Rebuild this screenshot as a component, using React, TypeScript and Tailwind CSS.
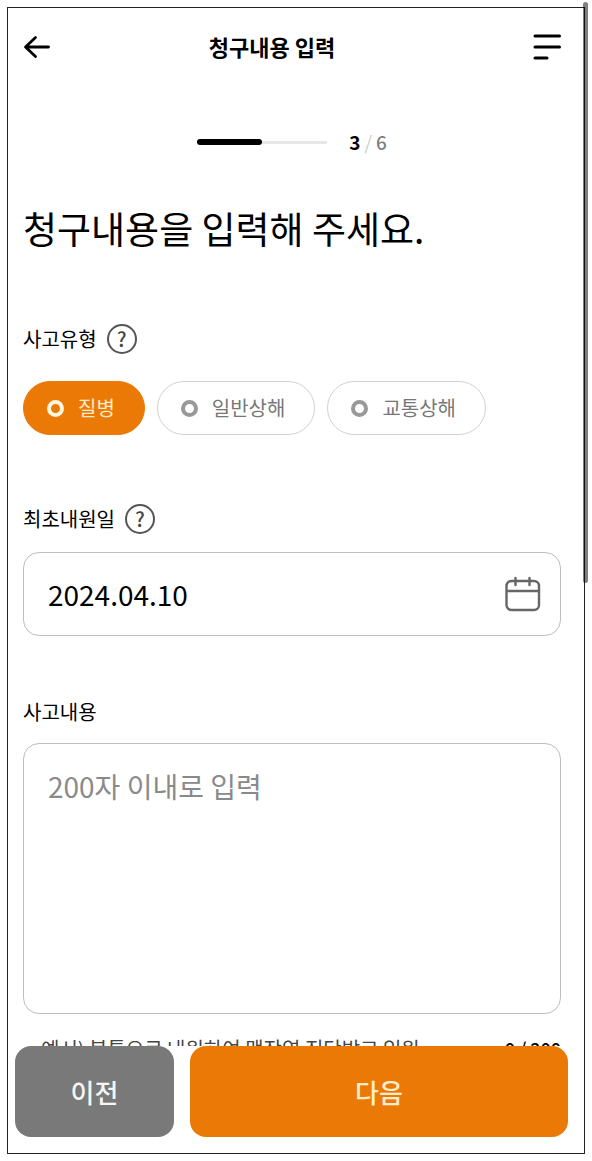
import { useState } from 'react'

const accidentTypes = ['질병', '일반상해', '교통상해']

function HelpButton({ label }: { label: string }) {
  return (
    <button
      type="button"
      aria-label={label}
      className="flex h-[30px] w-[30px] items-center justify-center rounded-full border-2 border-[#555] text-xl leading-none font-medium text-[#444]"
    >
      ?
    </button>
  )
}

function Header() {
  return (
    <header className="flex h-[77px] shrink-0 items-center pr-[23px] pl-[15px]">
      <button type="button" aria-label="뒤로" className="w-10">
        <svg width="28" height="24" viewBox="0 0 28 24" fill="none" stroke="#000" strokeWidth="2.8" strokeLinecap="round" strokeLinejoin="round">
          <path d="M12.5 2.5 2.5 12l10 9.5M3 12h22.5" />
        </svg>
      </button>
      <h2 className="flex-1 pb-0.5 text-center text-[22px] leading-8 font-bold">청구내용 입력</h2>
      <button type="button" aria-label="메뉴" className="flex w-20 justify-end">
        <svg width="28" height="28" viewBox="0 0 28 28" fill="none" stroke="#000" strokeWidth="3" strokeLinecap="round">
          <path d="M2 3h24.500M2 14h24.500M2 25h12" />
        </svg>
      </button>
    </header>
  )
}

function Progress() {
  return (
    <div className="mt-[41px] flex h-8 items-center justify-center">
      <div className="mr-[22px] flex w-[130px] items-center">
        <div className="h-1.5 w-1/2 rounded-full bg-black" />
        <div className="h-[3px] w-1/2 bg-[#e6e6e6]" />
      </div>
      <p className="flex gap-1 text-[19px] leading-8 font-medium text-[#808080]">
        <span className="font-bold text-black">3</span>
        <span className="font-light text-[#bbb]">/</span>
        <span>6</span>
      </p>
    </div>
  )
}

export default function App() {
  const [type, setType] = useState('질병')
  const [date, setDate] = useState('2024.04.10')
  const [content, setContent] = useState('')

  return (
    <div className="relative h-screen bg-white p-[7px] font-['Noto_Sans_CJK_KR','Noto_Sans_KR',sans-serif] text-black">
      <div className="flex h-full flex-col border border-[#222]">
        <Header />

        <main className="min-h-0 flex-1 overflow-y-auto pr-[23px] pl-[15px] [scrollbar-width:none]">
          <Progress />

          <h1 className="mt-[43px] text-[37px] leading-[54px]">청구내용을 입력해 주세요.</h1>

          <fieldset className="mt-[69px]">
            <legend className="flex h-[30px] items-center gap-2.5 text-xl">
              사고유형
              <HelpButton label="사고유형 도움말" />
            </legend>
            <div className="mt-[27px] flex gap-3">
              {accidentTypes.map((name) => (
                <label
                  key={name}
                  className="flex h-[54px] items-center gap-3.5 rounded-full border border-[#d2d2d2] pr-[29px] pl-[23px] text-xl text-[#777] has-checked:border-[#eb7905] has-checked:bg-[#eb7905] has-checked:text-[#ffeccb]"
                >
                  <input
                    type="radio"
                    name="accidentType"
                    value={name}
                    checked={type === name}
                    onChange={() => setType(name)}
                    className="h-[17px] w-[17px] appearance-none rounded-full border-4 border-[#999] bg-white checked:border-[#fff6e0] checked:bg-[#eb7905]"
                  />
                  {name}
                </label>
              ))}
            </div>
          </fieldset>

          <div className="mt-[69px]">
            <div className="flex h-[30px] items-center gap-2.5 text-xl">
              <label htmlFor="visitDate">최초내원일</label>
              <HelpButton label="최초내원일 도움말" />
            </div>
            <div className="mt-[18px] flex h-[84px] items-center rounded-2xl border border-[#bdbdbd] pr-[19px] pl-6">
              <input
                id="visitDate"
                type="text"
                value={date}
                onChange={(e) => setDate(e.target.value)}
                className="min-w-0 flex-1 text-[28px] leading-10 outline-none"
              />
              <button type="button" aria-label="날짜 선택">
                <svg width="36" height="36" viewBox="0 0 36 36" fill="none" stroke="#666" strokeWidth="2.4" strokeLinecap="round">
                  <rect x="1.500" y="5" width="32.500" height="29" rx="5" />
                  <path d="M2 15h31.500M10.500 2v7M24.500 2v7" />
                </svg>
              </button>
            </div>
          </div>

          <div className="mt-[61px]">
            <label htmlFor="content" className="block text-xl leading-[30px]">
              사고내용
            </label>
            <textarea
              id="content"
              maxLength={200}
              value={content}
              onChange={(e) => setContent(e.target.value)}
              placeholder="200자 이내로 입력"
              className="mt-4 block h-[271px] w-full resize-none rounded-2xl border border-[#bdbdbd] px-6 py-[22px] text-[28px] leading-10 outline-none placeholder:text-[#8a8a8a]"
            />
            <div className="mt-5 flex justify-between pl-[18px] text-xl leading-[30px]">
              <p className="text-[#444]">예시) 복통으로 내원하여 맹장염 진단받고 입원</p>
              <p className="text-lg leading-7 font-medium">{content.length} / 200</p>
            </div>
          </div>
        </main>

        <footer className="flex shrink-0 gap-4 bg-white pr-4 pb-4 pl-[7px] text-[26px] font-medium">
          <button type="button" className="h-[91px] w-[159px] rounded-2xl bg-[#797979] text-[#f5f5f5]">
            이전
          </button>
          <button type="button" className="h-[91px] flex-1 rounded-2xl bg-[#eb7905] text-[#ffeccb]">
            다음
          </button>
        </footer>
      </div>

      {/* scroll indicator */}
      <div className="absolute top-0.5 right-1 h-1/2 w-[5px] rounded-full bg-black/50" />
    </div>
  )
}
